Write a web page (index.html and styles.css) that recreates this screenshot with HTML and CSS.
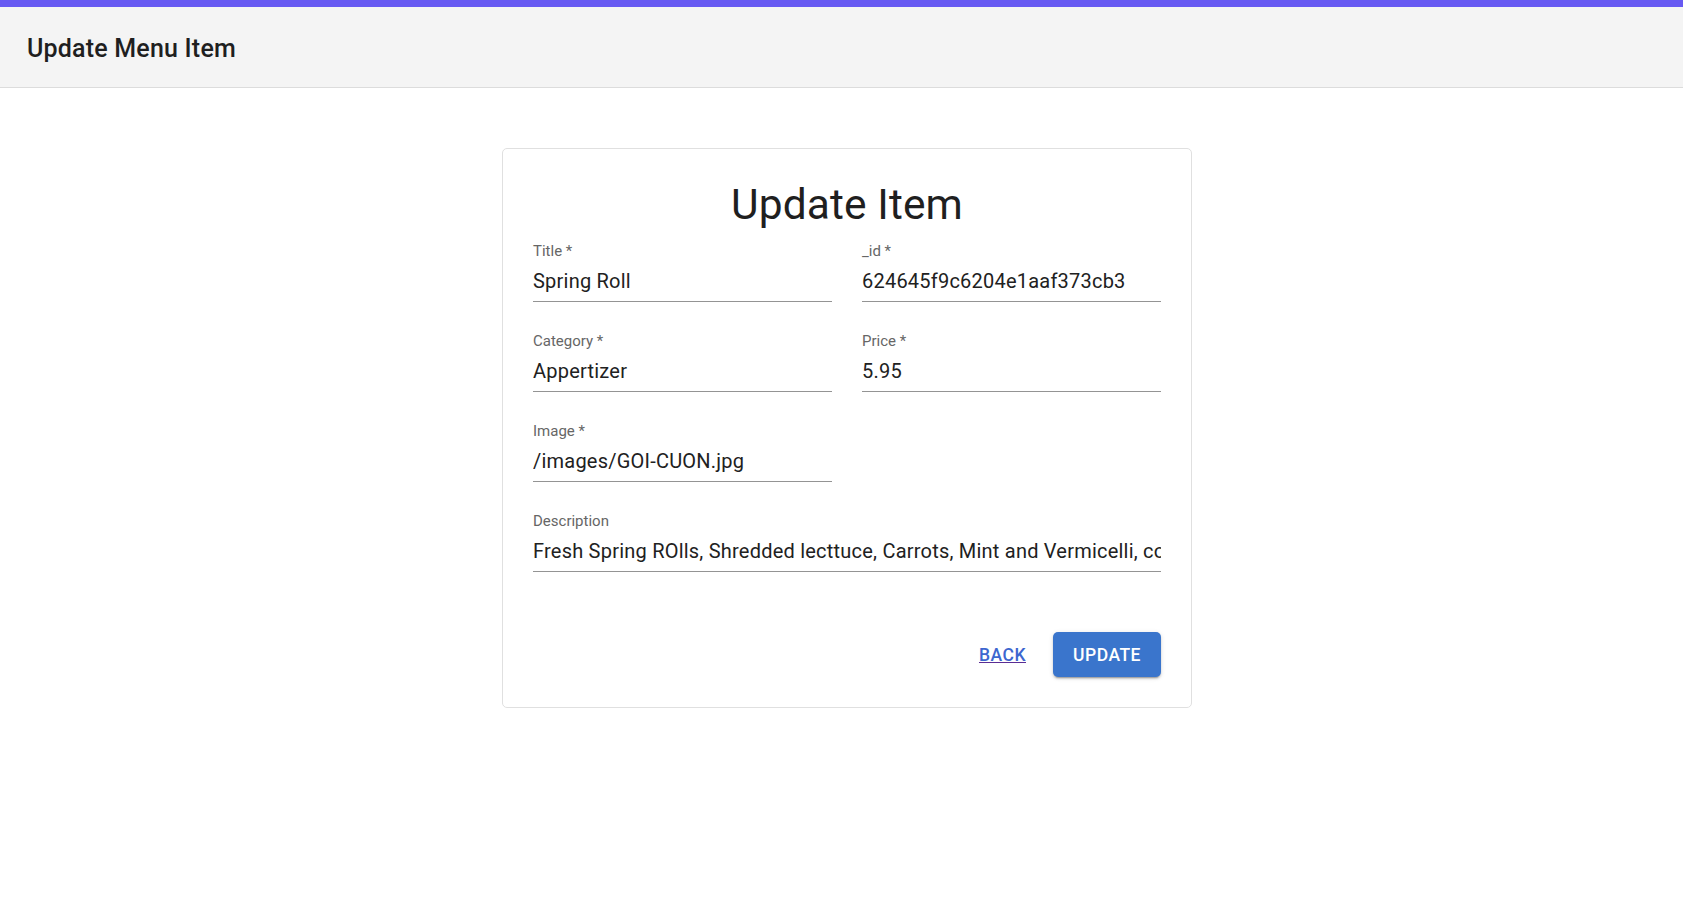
FILE: index.html
```html
<!DOCTYPE html>
<html lang="en">
<head>
<meta charset="utf-8">
<title>Update Menu Item</title>
<link rel="stylesheet" href="styles.css">
</head>
<body>
<div class="topbar"></div>
<header class="appbar">
  <h1 class="appbar-title">Update Menu Item</h1>
</header>
<main class="page">
  <form class="card">
    <h2 class="card-title">Update Item</h2>
    <div class="fields">
      <div class="field">
        <label class="field-label">Title *</label>
        <input class="field-input" type="text" value="Spring Roll">
      </div>
      <div class="field">
        <label class="field-label">_id *</label>
        <input class="field-input" type="text" value="624645f9c6204e1aaf373cb3">
      </div>
      <div class="field">
        <label class="field-label">Category *</label>
        <input class="field-input" type="text" value="Appertizer">
      </div>
      <div class="field">
        <label class="field-label">Price *</label>
        <input class="field-input" type="text" value="5.95">
      </div>
      <div class="field">
        <label class="field-label">Image *</label>
        <input class="field-input" type="text" value="/images/GOI-CUON.jpg">
      </div>
      <div class="field field-wide">
        <label class="field-label">Description</label>
        <input class="field-input" type="text" value="Fresh Spring ROlls, Shredded lecttuce, Carrots, Mint and Vermicelli, comes with peanut sauce">
      </div>
    </div>
    <div class="actions">
      <a class="back-link" href="#">Back</a>
      <button class="btn-primary" type="button">Update</button>
    </div>
  </form>
</main>
</body>
</html>
```

FILE: styles.css
```css
* {
  box-sizing: border-box;
}

html, body {
  margin: 0;
  padding: 0;
  background: #ffffff;
}

body {
  font-family: Roboto, "Liberation Sans", Arial, sans-serif;
  color: #212121;
}

.topbar {
  height: 7px;
  background: #6759f2;
}

.appbar {
  height: 81px;
  background: #f4f4f4;
  border-bottom: 1px solid #dcdcdc;
  display: flex;
  align-items: center;
  padding: 2px 27px 0;
}

.appbar-title {
  margin: 0;
  font-size: 25px;
  font-weight: 500;
  color: #1f1f1f;
  letter-spacing: 0.2px;
}

.page {
  display: flex;
  justify-content: center;
  padding: 60px 0 0 11px;
}

.card {
  width: 690px;
  border: 1px solid #e0e0e0;
  border-radius: 5px;
  padding: 31px 30px 30px;
  background: #fff;
}

.card-title {
  margin: 0 0 12px;
  font-size: 42.5px;
  line-height: 50px;
  font-weight: 400;
  text-align: center;
  color: #1f1f1f;
  letter-spacing: 0.1px;
}

.fields {
  display: grid;
  grid-template-columns: 1fr 1fr;
  column-gap: 30px;
  row-gap: 30px;
}

.field {
  display: flex;
  flex-direction: column;
}

.field-wide {
  grid-column: 1 / span 2;
}

.field-label {
  font-size: 15px;
  line-height: 18px;
  color: #666666;
  margin-bottom: 9px;
}

.field-input {
  font-family: Roboto, "Liberation Sans", Arial, sans-serif;
  font-size: 20px;
  line-height: 24px;
  letter-spacing: 0.22px;
  height: 33px;
  color: #212121;
  border: none;
  border-bottom: 1px solid #949494;
  padding: 0 0 8px;
  margin: 0;
  background: transparent;
  outline: none;
  width: 100%;
}

.actions {
  margin-top: 60px;
  display: flex;
  justify-content: flex-end;
  align-items: center;
}

.back-link {
  font-size: 17.5px;
  font-weight: 500;
  letter-spacing: 0.5px;
  text-transform: uppercase;
  color: #3d66cf;
  text-decoration: underline;
  text-decoration-color: #5a2d94;
  margin-right: 27px;
}

.btn-primary {
  font-family: Roboto, "Liberation Sans", Arial, sans-serif;
  font-size: 17.5px;
  font-weight: 500;
  letter-spacing: 0.5px;
  text-transform: uppercase;
  color: #ffffff;
  background: #3a75cc;
  border: none;
  border-radius: 5px;
  height: 45px;
  width: 108px;
  padding: 0;
  box-shadow: 0 3px 1px -2px rgba(0,0,0,0.2), 0 2px 2px 0 rgba(0,0,0,0.14), 0 1px 5px 0 rgba(0,0,0,0.12);
  cursor: pointer;
}
```
